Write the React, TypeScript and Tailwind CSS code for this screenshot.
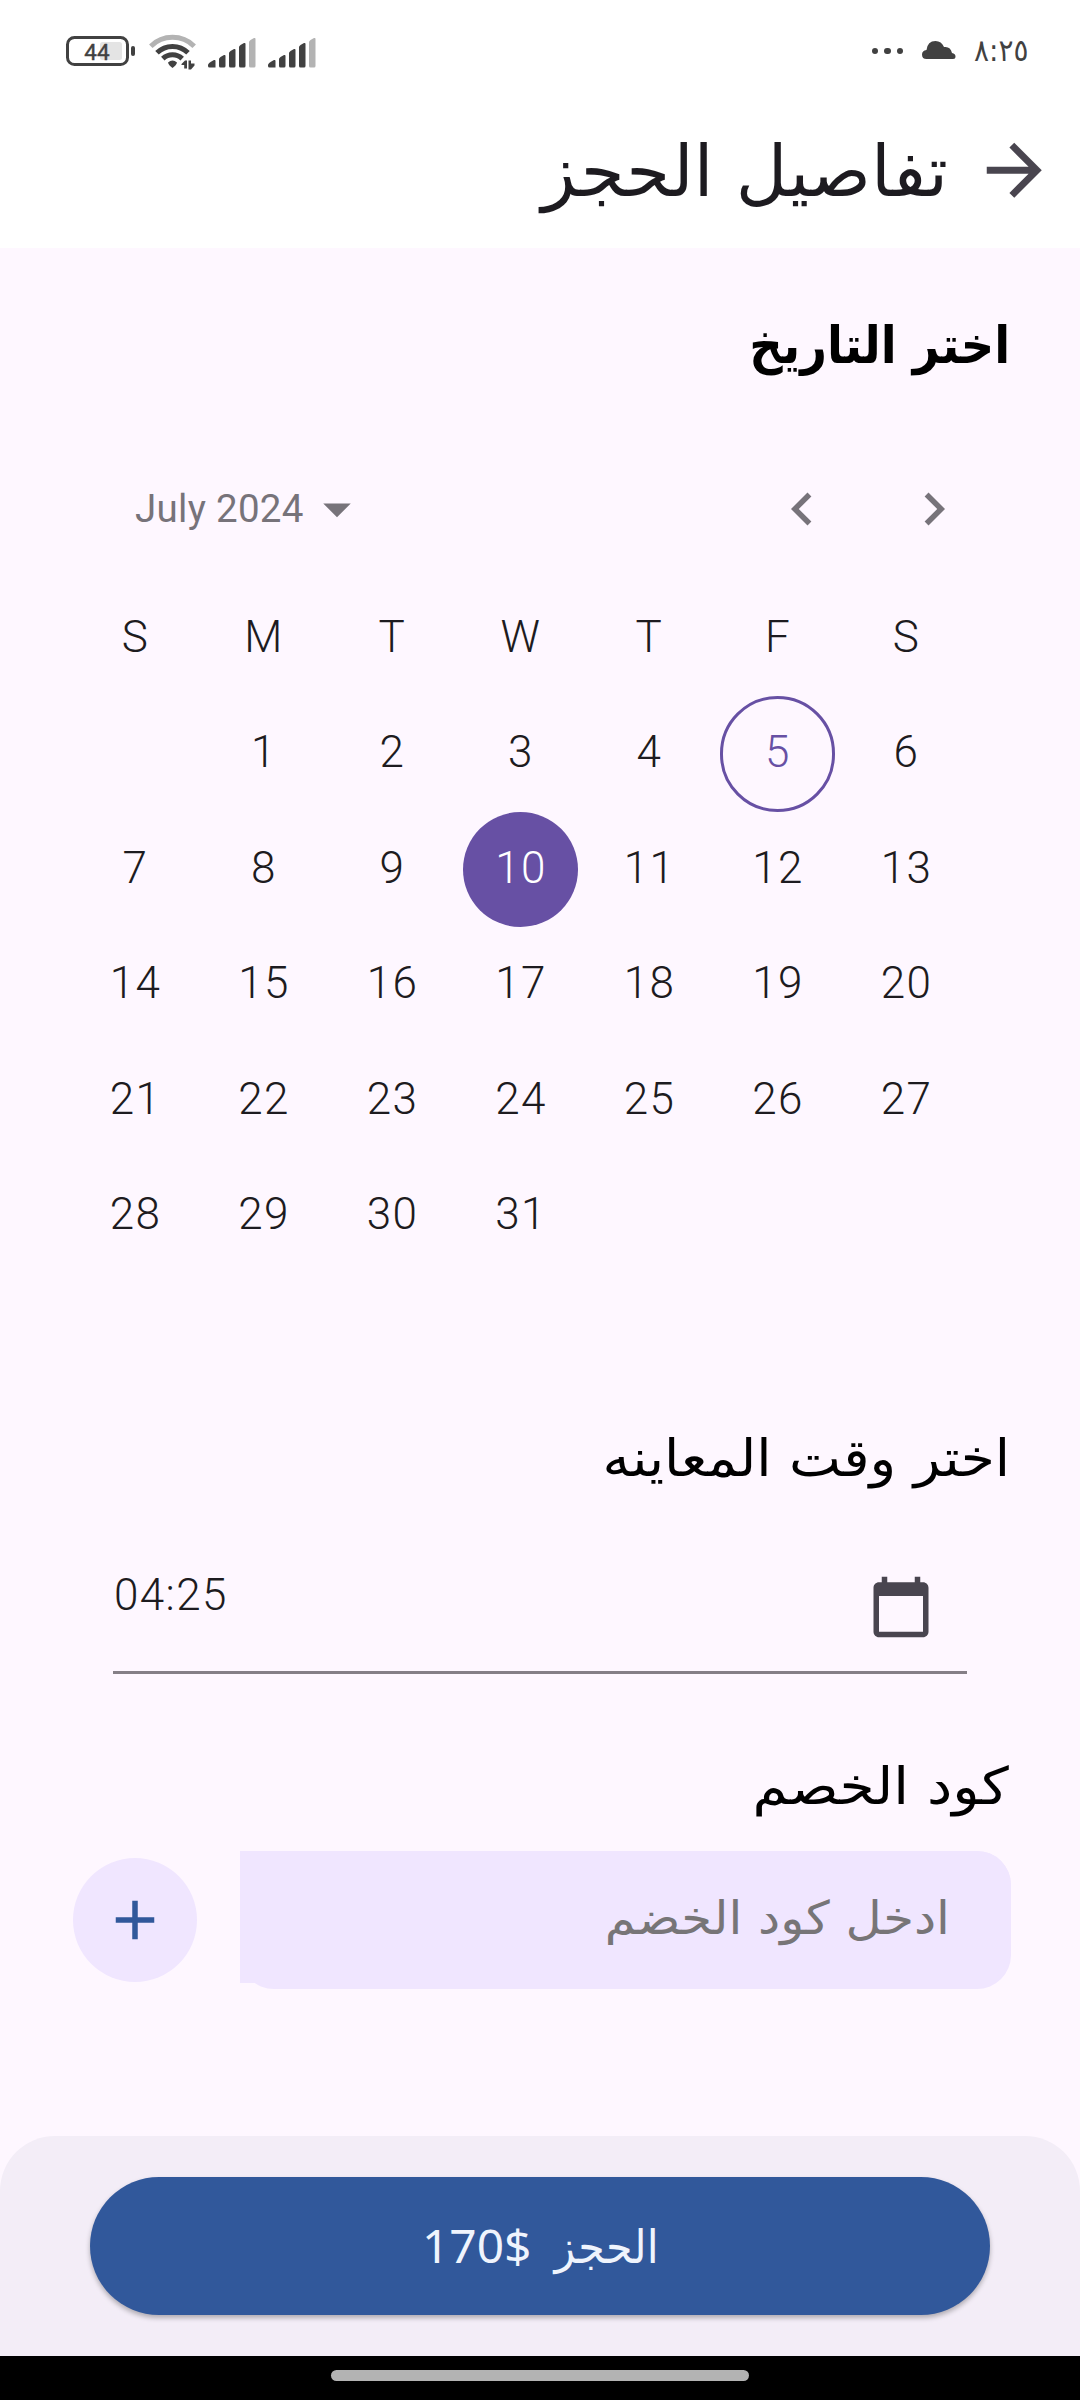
const WEEKDAYS = ["S", "M", "T", "W", "T", "F", "S"];
const FIRST_WEEKDAY = 1;
const DAYS_IN_MONTH = 31;
const TODAY = 5;
const SELECTED = 10;

function Battery() {
  return (
    <svg className="h-[30px] w-[70px]" viewBox="0 0 70 30" fill="none">
      <rect x="34" y="6" width="22" height="18" rx="2.5" fill="#e4e4e4" />
      <rect x="1.5" y="1.5" width="60" height="27" rx="7" stroke="#414141" strokeWidth="3" />
      <rect x="65" y="10" width="4" height="10" rx="2" fill="#414141" />
      <text
        x="31"
        y="24"
        textAnchor="middle"
        fontFamily="Roboto, sans-serif"
        fontSize="22.5"
        fontWeight="400"
        stroke="#414141"
        strokeWidth="0.4"
        fill="#414141"
      >
        44
      </text>
    </svg>
  );
}

function Wifi() {
  return (
    <svg className="h-[36px] w-[48px]" viewBox="0 0 48 36" fill="none">
      <path d="M1.8 12.2A31 31 0 0 1 45.2 12.2" stroke="#b3b3b3" strokeWidth="5" />
      <path d="M8 18.8A22 22 0 0 1 39 18.8" stroke="#414141" strokeWidth="5" />
      <path d="M13.8 24.6A14 14 0 0 1 33.2 24.6" stroke="#414141" strokeWidth="5" />
      <path d="M19 28.5Q23.5 24.5 28 28.5Q27.5 31 23.5 34Q19.5 31 19 28.5Z" fill="#414141" />
      <path d="M32.5 30L36 26.500H38V34.500H35.200V31H32.500ZM39.500 26.500H42V29.500H45.500V31.500L42 35.500H39.500Z" fill="#414141" />
    </svg>
  );
}

function Signal() {
  return (
    <svg className="h-[31px] w-[48px]" viewBox="0 0 48 31" fill="#414141">
      <path d="M0 28Q0 26 6 23Q7.5 22.5 7.5 24V30.5H1.5Q0 30.5 0 29Z" />
      <path d="M11 22Q11 20.500 16 18Q17.500 17.500 17.500 19V29Q17.500 30.500 16 30.500H12.500Q11 30.500 11 29Z" />
      <path d="M21 16Q21 14.500 26 12Q27.500 11.500 27.500 13V29Q27.500 30.500 26 30.500H22.500Q21 30.500 21 29Z" />
      <path d="M31 10Q31 8.500 36 6Q37.500 5.500 37.500 7V29Q37.500 30.500 36 30.500H32.500Q31 30.500 31 29Z" />
      <path
        d="M41 5Q41 3.500 46 1Q47.500 .5 47.500 2V29Q47.500 30.500 46 30.500H42.500Q41 30.500 41 29Z"
        fill="#b3b3b3"
      />
    </svg>
  );
}

function StatusBar() {
  return (
    <div className="flex h-[93px] items-start justify-between pl-[66px] pr-[52px] pt-[34px]">
      <div className="flex items-start">
        <div className="pt-[2px]">
          <Battery />
        </div>
        <div className="ml-[13px]">
          <Wifi />
        </div>
        <div className="ml-[11px] flex gap-3 pt-[2.5px]">
          <Signal />
          <Signal />
        </div>
      </div>
      <div className="flex h-[34px] items-center">
        <div className="flex gap-[6px]">
          <span className="size-[6.5px] rounded-full bg-[#414141]" />
          <span className="size-[6.5px] rounded-full bg-[#414141]" />
          <span className="size-[6.5px] rounded-full bg-[#414141]" />
        </div>
        <svg className="ml-[19px] mt-[-2px] h-[18px] w-[34px]" viewBox="0 0 34 18" fill="#414141">
          <path d="M4.5 18Q0 18 0 13.5Q0 9.500 4.500 9Q5.500 0 13.500 0Q19.500 0 22 6Q28.500 5 30 12Q33.500 12.500 33.500 15.500Q33.500 18 31 18Z" />
        </svg>
        <div
          dir="rtl"
          className="ml-[18px] flex w-[54px] justify-start text-[31px] leading-[34px] text-[#414141] font-['DejaVu_Sans',sans-serif]"
        >
          <span className="mt-[-2px] origin-right scale-x-[0.9] whitespace-nowrap">٨:٢٥</span>
        </div>
      </div>
    </div>
  );
}

function AppBar() {
  return (
    <header
      dir="rtl"
      className="flex h-[155px] items-center pr-[25px] font-['DejaVu_Sans',sans-serif]"
    >
      <svg className="size-[82.5px]" viewBox="0 0 24 24" fill="#49454f">
        <path d="M12 4l-1.41 1.41L16.17 11H4v2h12.17l-5.58 5.59L12 20l8-8z" />
      </svg>
      <h1 className="mr-[24.5px] mt-[3px] text-[70.8px] leading-[80px] text-[#1d1b20]">تفاصيل الحجز</h1>
    </header>
  );
}

function MonthHeader() {
  return (
    <div className="mt-[101px] flex h-[66px] items-center pl-[135px] pr-[113px] text-[#77737a]">
      <span className="text-[38.5px] leading-[44px] tracking-[0.275px]">July 2024</span>
      <svg className="size-[66px]" viewBox="0 0 24 24" fill="currentColor">
        <path d="M7 10l5 5 5-5z" />
      </svg>
      <div className="ml-auto flex gap-[66px]">
        <svg className="size-[66px]" viewBox="0 0 24 24" fill="currentColor">
          <path d="M15.41 7.41L14 6l-6 6 6 6 1.41-1.41L10.83 12z" />
        </svg>
        <svg className="size-[66px]" viewBox="0 0 24 24" fill="currentColor">
          <path d="M10 6L8.59 7.41 13.17 12l-4.58 4.59L10 18l6-6z" />
        </svg>
      </div>
    </div>
  );
}

function Day({ day }: { day: number }) {
  const base =
    "flex size-[115.5px] items-center justify-center justify-self-center rounded-full pb-[3px] pl-[1.4px]";
  if (day === SELECTED) return <div className={`${base} bg-[#6750a4] text-white`}>{day}</div>;
  if (day === TODAY)
    return <div className={`${base} border-3 border-[#6750a4] text-[#6750a4]`}>{day}</div>;
  return <div className={base}>{day}</div>;
}

function MonthGrid() {
  return (
    <div className="ml-[70.5px] mt-[38.5px] grid w-[899.5px] auto-rows-[115.5px] grid-cols-7 text-[44px] font-light leading-[52px] tracking-[1.375px] text-[#1d1b20]">
      {WEEKDAYS.map((name, i) => (
        <div key={i} className="flex items-center justify-center pb-[2px] pl-[1.4px]">
          {name}
        </div>
      ))}
      {Array.from({ length: FIRST_WEEKDAY }, (_, i) => (
        <div key={`blank-${i}`} />
      ))}
      {Array.from({ length: DAYS_IN_MONTH }, (_, i) => (
        <Day key={i} day={i + 1} />
      ))}
    </div>
  );
}

function TimeField() {
  return (
    <div className="ml-[113px] mt-[61px] flex h-[125px] w-[854px] items-start justify-between border-b-3 border-[#857f87] pr-[33px]">
      <span className="pl-[1px] pt-[20px] text-[44px] font-light leading-[52px] tracking-[1.375px] text-[#1d1b20]">
        04:25
      </span>
      <svg className="mt-[24.5px] size-[66px]" viewBox="0 0 24 24" fill="#49454f">
        <path d="M20 3h-1V1h-2v2H7V1H5v2H4c-1.1 0-2 .9-2 2v16c0 1.1.9 2 2 2h16c1.1 0 2-.9 2-2V5c0-1.1-.9-2-2-2zm0 18H4V8h16v13z" />
      </svg>
    </div>
  );
}

function CouponRow() {
  return (
    <div className="mt-[35px] flex h-[138px] items-center pl-[73px] pr-[69px]">
      <button className="flex size-[124px] items-center justify-center rounded-full bg-[#f0e6ff]">
        <svg className="size-[66px]" viewBox="0 0 24 24" fill="#31589b">
          <path d="M19 13h-6v6h-2v-6H5v-2h6V5h2v6h6v2z" />
        </svg>
      </button>
      <div className="ml-[43px] h-[138px] flex-1 rounded-[34px] rounded-tl-none bg-[#f0e6ff]">
        <div
          dir="rtl"
          className="flex h-[132px] items-center rounded-tr-[34px] rounded-br-[34px] bg-[#f0e6ff] pr-[61px] pt-[2px] text-[46px] leading-[60px] text-[#777577] font-['DejaVu_Sans',sans-serif]"
        >
          <span className="origin-right scale-x-[1.082] whitespace-nowrap">ادخل كود الخضم</span>
        </div>
      </div>
    </div>
  );
}

export default function App() {
  return (
    <div className="flex h-[2400px] w-[1080px] flex-col overflow-hidden bg-[#fef7ff] font-[Roboto,sans-serif]">
      <div className="bg-white">
        <StatusBar />
        <AppBar />
      </div>

      <main className="flex-1">
        <h2
          dir="rtl"
          className="mt-[67px] flex h-[60px] items-center pr-[70px] text-[51.3px] font-bold leading-[60px] text-black font-['DejaVu_Sans',sans-serif]"
        >
          <span className="origin-right scale-x-[0.905] whitespace-nowrap">اختر التاريخ</span>
        </h2>
        <MonthHeader />
        <MonthGrid />

        <h2
          dir="rtl"
          className="mt-[154.5px] flex h-[60px] items-center pr-[69.5px] text-[51.3px] leading-[60px] text-black font-['DejaVu_Sans',sans-serif]"
        >
          <span className="origin-right scale-x-[1.075] whitespace-nowrap">اختر وقت المعاينه</span>
        </h2>
        <TimeField />

        <h2
          dir="rtl"
          className="mt-[82px] flex h-[60px] items-center pr-[71.5px] text-[51.3px] leading-[60px] text-black font-['DejaVu_Sans',sans-serif]"
        >
          <span className="origin-right scale-x-[1.106] whitespace-nowrap">كود الخصم</span>
        </h2>
        <CouponRow />
      </main>

      <footer className="h-[220px] rounded-t-[55px] bg-[#f3edf7] px-[90px] pt-[41px]">
        <button className="flex h-[137.5px] w-[900px] items-start rounded-full bg-[#31589b] pl-[332px] pt-[40px] text-[46px] leading-[60px] text-[#eff4fd] shadow-[0_3px_5px_rgba(0,0,0,0.28)]">
          <span className="mt-[-2px] w-[110px] text-left font-['Noto_Sans',sans-serif]">
            <span className="inline-block origin-left scale-x-[1.04]">170$</span>
          </span>
          <span
            dir="rtl"
            className="ml-[23px] w-[104px] whitespace-nowrap text-right font-['DejaVu_Sans',sans-serif]"
          >
            <span className="inline-block origin-right scale-x-[0.932]">الحجز</span>
          </span>
        </button>
      </footer>

      <div className="flex h-[44px] justify-center bg-black pt-[14px]">
        <div className="h-[11px] w-[418px] rounded-full bg-[#b3b3b3]" />
      </div>
    </div>
  );
}
